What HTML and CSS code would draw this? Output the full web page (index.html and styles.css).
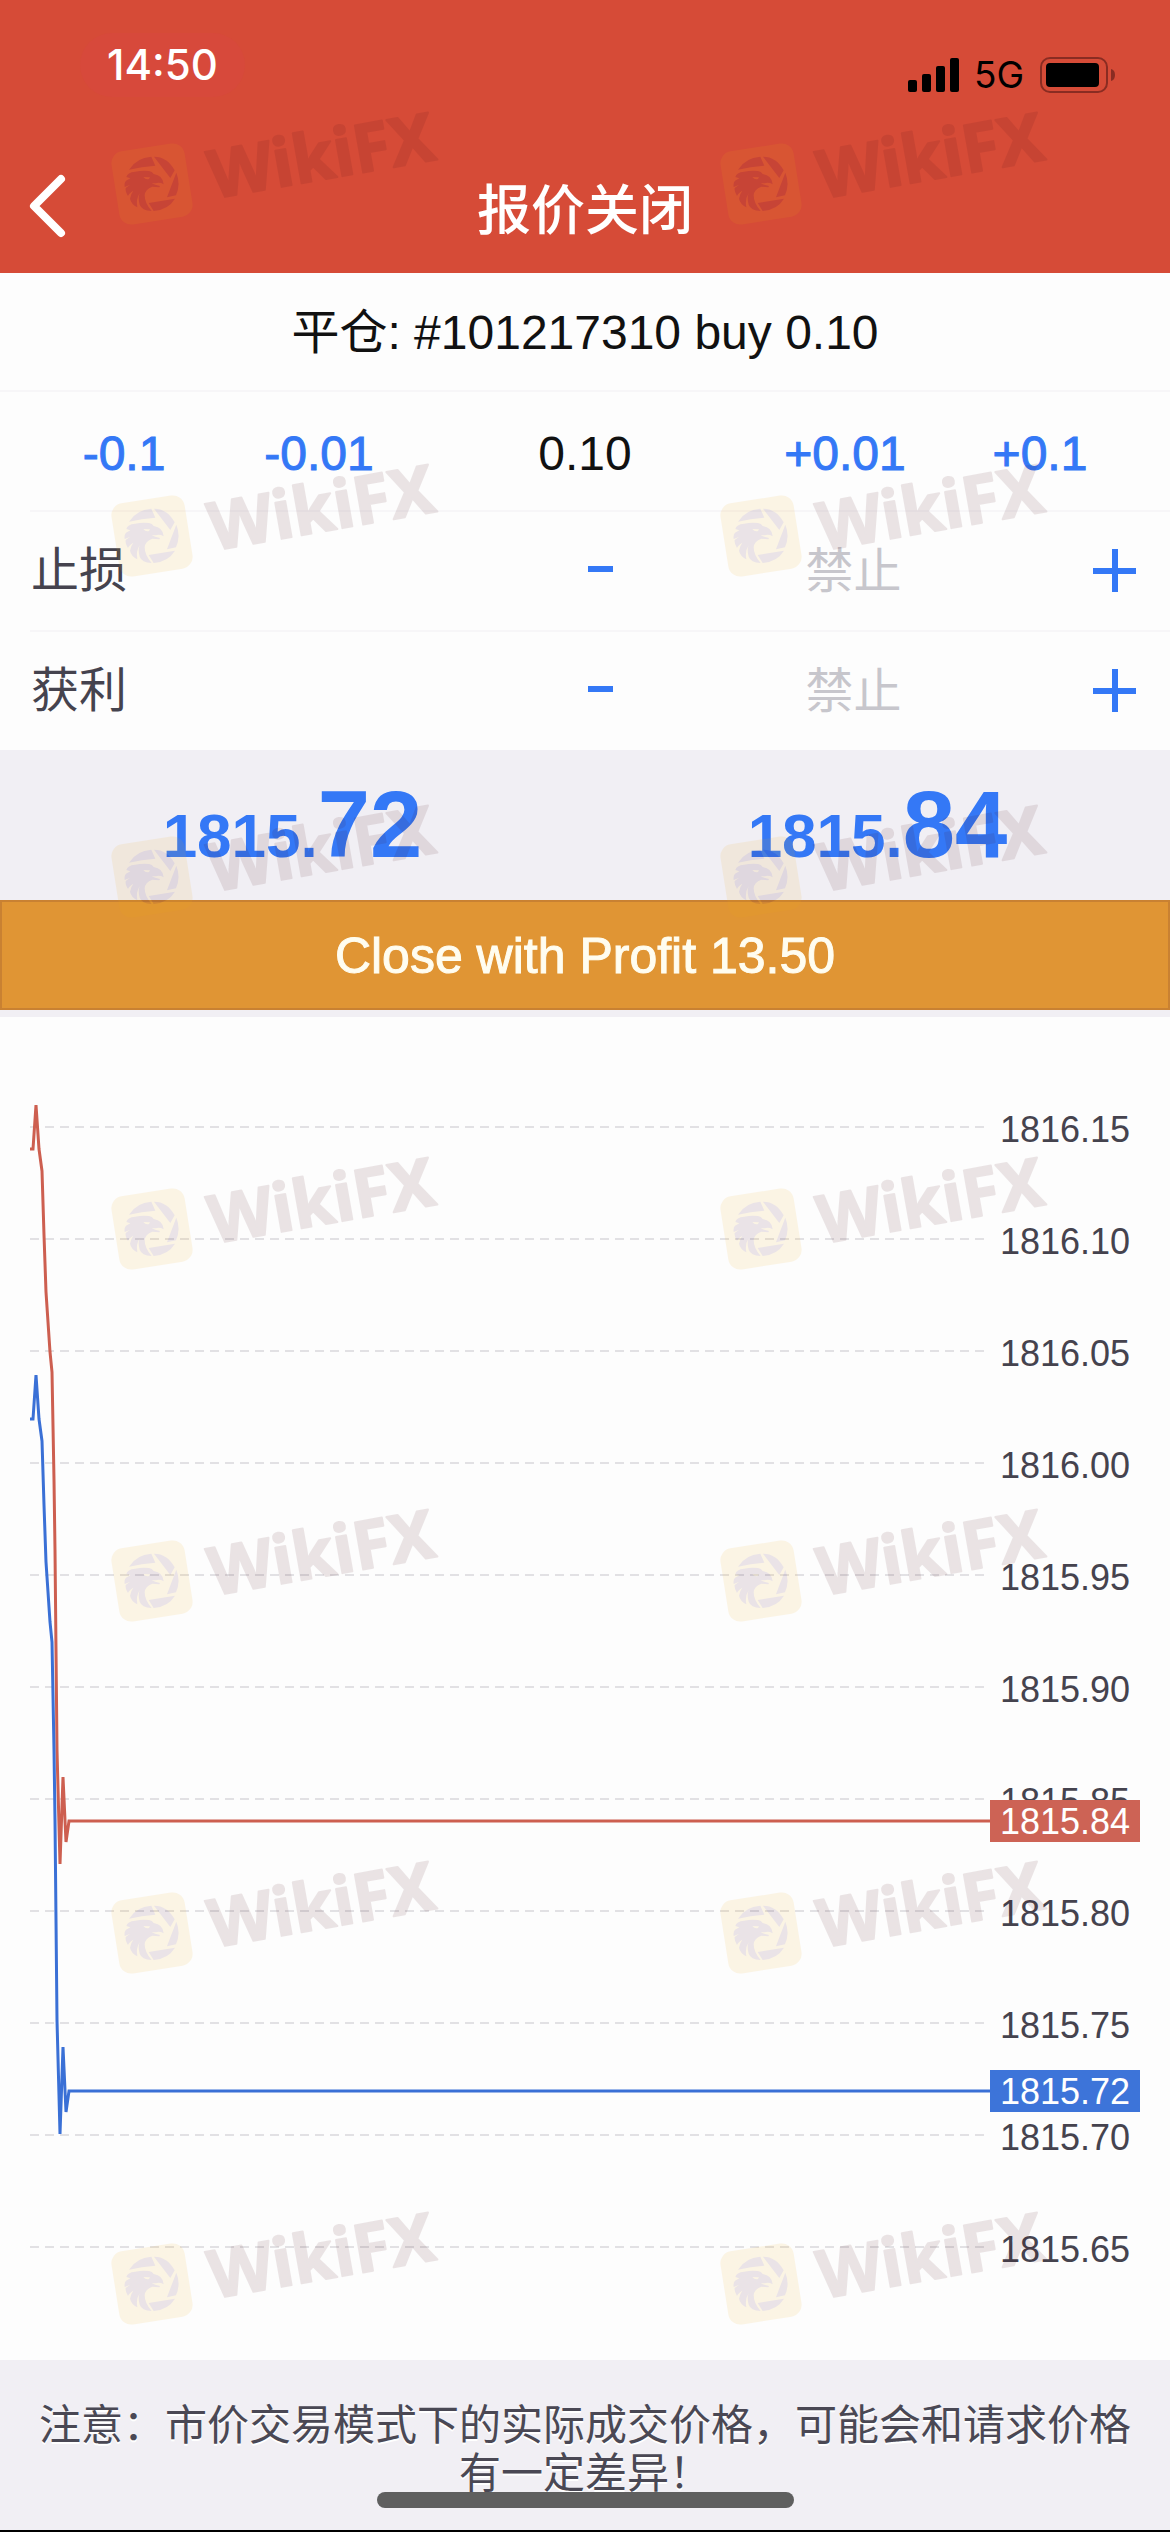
FILE: index.html
```html
<!DOCTYPE html>
<html lang="zh-CN">
  <head>
    <meta charset="UTF-8" />
    <meta name="viewport" content="width=device-width, initial-scale=1.0" />
    <title>报价关闭</title>
    <link rel="stylesheet" href="styles.css" />
  </head>
  <body>
    <header class="header">
      <div class="status-bar">
        <span class="status-time">14:50</span>
        <div class="status-icons">
          <svg class="signal-icon" width="52" height="34" viewBox="0 0 52 34">
            <rect x="0" y="22" width="9" height="12" rx="2" />
            <rect x="14" y="16" width="9" height="18" rx="2" />
            <rect x="28" y="8" width="9" height="26" rx="2" />
            <rect x="42" y="0" width="9" height="34" rx="2" />
          </svg>
          <span class="status-network">5G</span>
          <svg class="battery-icon" width="76" height="36" viewBox="0 0 76 36">
            <rect x="1" y="1" width="66" height="34" rx="9" fill="none" stroke="#8a2c22" stroke-width="2" />
            <rect x="6" y="6" width="53" height="24" rx="4" />
            <path d="M71 12 Q75 13 75 18 Q75 23 71 24 Z" fill="#8a2c22" />
          </svg>
        </div>
      </div>
      <nav class="nav-bar">
        <button type="button" class="back-button" aria-label="返回">
          <svg width="38" height="64" viewBox="0 0 38 64">
            <path d="M33 5 L6 32 L33 59" fill="none" stroke="#fff" stroke-width="8" stroke-linecap="round" stroke-linejoin="round" />
          </svg>
        </button>
        <h1 class="nav-title">报价关闭</h1>
      </nav>
    </header>

    <main class="main">
      <form class="order-form">
        <div class="order-title">平仓: #101217310 buy 0.10</div>

        <div class="volume-row">
          <button type="button" class="step-button">-0.1</button>
          <button type="button" class="step-button">-0.01</button>
          <input type="text" class="volume-input" aria-label="交易量" value="0.10" />
          <button type="button" class="step-button">+0.01</button>
          <button type="button" class="step-button">+0.1</button>
        </div>

        <div class="limit-row">
          <label for="stopLoss" class="limit-label">止损</label>
          <button type="button" class="limit-button" aria-label="减少止损">
            <svg width="26" height="44" viewBox="0 0 26 44"><path d="M0 20 H25" /></svg>
          </button>
          <input type="text" id="stopLoss" class="limit-input" placeholder="禁止" />
          <button type="button" class="limit-button" aria-label="增加止损">
            <svg width="44" height="44" viewBox="0 0 44 44"><path d="M0 22 H43 M22 0 V43" /></svg>
          </button>
        </div>

        <div class="limit-row">
          <label for="takeProfit" class="limit-label">获利</label>
          <button type="button" class="limit-button" aria-label="减少获利">
            <svg width="26" height="44" viewBox="0 0 26 44"><path d="M0 20 H25" /></svg>
          </button>
          <input type="text" id="takeProfit" class="limit-input" placeholder="禁止" />
          <button type="button" class="limit-button" aria-label="增加获利">
            <svg width="44" height="44" viewBox="0 0 44 44"><path d="M0 22 H43 M22 0 V43" /></svg>
          </button>
        </div>

        <div class="prices">
          <div class="price">1815.<span class="price-big">72</span></div>
          <div class="price">1815.<span class="price-big">84</span></div>
        </div>

        <button type="button" class="close-button">Close with Profit 13.50</button>
      </form>

      <section class="chart">
        <div class="grid-row"><span class="grid-line"></span><span class="grid-label">1816.15</span></div>
        <div class="grid-row"><span class="grid-line"></span><span class="grid-label">1816.10</span></div>
        <div class="grid-row"><span class="grid-line"></span><span class="grid-label">1816.05</span></div>
        <div class="grid-row"><span class="grid-line"></span><span class="grid-label">1816.00</span></div>
        <div class="grid-row"><span class="grid-line"></span><span class="grid-label">1815.95</span></div>
        <div class="grid-row"><span class="grid-line"></span><span class="grid-label">1815.90</span></div>
        <div class="grid-row"><span class="grid-line"></span><span class="grid-label">1815.85</span></div>
        <div class="grid-row"><span class="grid-line"></span><span class="grid-label">1815.80</span></div>
        <div class="grid-row"><span class="grid-line"></span><span class="grid-label">1815.75</span></div>
        <div class="grid-row"><span class="grid-line"></span><span class="grid-label">1815.70</span></div>
        <div class="grid-row"><span class="grid-line"></span><span class="grid-label">1815.65</span></div>

        <!-- bid is the ask line moved down by the spread -->
        <svg class="chart-lines">
          <polyline class="ask-line" points="0,132 3,132 6,88 9,132 12,154 14,218 16,275 20,335 22,355 24,463 25,533 27,733 30,847 33,760 36,825 39,804 3000,804" />
          <polyline class="bid-line" transform="translate(0 270)" points="0,132 3,132 6,88 9,132 12,154 14,218 16,275 20,335 22,355 24,463 25,533 27,733 30,847 33,760 36,825 39,804 3000,804" />
        </svg>
        <span class="price-tag ask-tag">1815.84</span>
        <span class="price-tag bid-tag">1815.72</span>
      </section>
    </main>

    <footer class="footer">
      <p class="notice">注意：市价交易模式下的实际成交价格，可能会和请求价格有一定差异！</p>
      <div class="home-indicator"></div>
    </footer>

    <svg class="watermarks" aria-hidden="true">
      <defs>
        <g id="mark">
          <g transform="rotate(-9)">
            <rect x="-37" y="-37" width="74" height="74" rx="12" fill="#f0aa14" />
          </g>
          <g transform="scale(0.333) translate(-157 -268)" fill="#490d30">
            <path d="M88 225 Q110 189 155 186 L167 213 Q125 216 88 225 Z" />
            <path d="M163 186 Q203 186 225 227 L212 250 Z" />
            <path d="M230 234 Q244 268 229 302 L202 308 Z" />
            <path d="M147 325 L226 312 Q206 345 162 349 Z" />
            <path d="M80 247 Q83 233 106 231 Q130 226 148 229 Q158 231 162 238 Q190 242 192 269 Q180 262 168 266 L156 266 Q165 271 181 274 L179 278 L158 276 Q136 284 135 302 Q135 326 156 349 Q126 347 120 330 Q114 310 120 296 Q108 314 113 338 Q94 328 91 312 Q93 298 101 288 Q86 298 85 304 Q76 290 78 280 L90 271 L75 277 Q73 264 79 258 L92 251 Z M131 247 Q138 256 148 253 L151 248 Z" fill-rule="evenodd" />
          </g>
          <text class="mark-text" transform="translate(61 15) rotate(-10)">WikiFX</text>
        </g>
        <g id="markRow">
          <use href="#mark" x="152" />
          <use href="#mark" x="761" />
        </g>
      </defs>
      <use href="#markRow" y="184" />
      <use href="#markRow" y="536" />
      <use href="#markRow" y="877" />
      <use href="#markRow" y="1229" />
      <use href="#markRow" y="1581" />
      <use href="#markRow" y="1933" />
      <use href="#markRow" y="2284" />
    </svg>
  </body>
</html>
```
FILE: styles.css
```css
/* General styling */
* {
  box-sizing: border-box;
}

body {
  position: relative;
  margin: 0;
  font-family: "Liberation Sans", "Noto Sans CJK SC", sans-serif;
  font-size: 48px;
  color: #111;
  background-color: #fdfdfd;
}

button,
input {
  margin: 0;
  padding: 0;
  border: none;
  background: none;
  font: inherit;
  text-align: center;
}

button {
  cursor: pointer;
}

svg {
  display: block;
}

/* Header */
.header {
  height: 273px;
  background-color: #d64b37;
}

.status-bar {
  display: flex;
  justify-content: space-between;
  align-items: flex-start;
  padding: 33px 54px 0 80px;
  height: 145px;
  font-family: Inter, sans-serif;
}

.status-time {
  width: 165px;
  border-radius: 32px;
  background-color: #d7493b;
  font-size: 42px;
  font-weight: 500;
  line-height: 64px;
  text-align: center;
  color: #fff;
}

.status-icons {
  display: flex;
  align-items: center;
  padding-top: 23px;
  line-height: 38px;
  color: #000;
}

.status-network {
  margin: 0 16px 0 14px;
  font-size: 37px;
}

.nav-bar {
  display: grid;
  grid-template-columns: 120px 1fr 120px;
  align-items: center;
  height: 122px;
}

.back-button {
  padding-left: 28px;
}

.nav-title {
  margin: 0;
  font-size: 54px;
  font-weight: 500;
  text-align: center;
  color: #fff;
}

/* Order form */
.order-title {
  height: 117px;
  line-height: 120px;
  text-align: center;
}

.volume-row {
  display: grid;
  grid-template-columns: 188fr 202fr 330fr 190fr 200fr;
  height: 120px;
  padding: 4px 30px 0;
  border-top: 2px solid #f7f6f8;
}

.step-button {
  color: #3478f6;
  -webkit-text-stroke: 1px #3478f6;
}

.volume-input {
  width: 100%;
  color: #111;
}

.limit-row {
  display: grid;
  grid-template-columns: 541fr 60fr 445fr 77fr;
  align-items: center;
  height: 120px;
  margin-left: 30px;
  padding-right: 17px;
  border-top: 2px solid #f7f6f8;
}

.limit-label {
  padding-left: 1px;
  line-height: 48px;
  color: #45434e;
}

.limit-button {
  display: flex;
  justify-content: center;
}

.limit-button path {
  fill: none;
  stroke: #3478f6;
  stroke-width: 6;
}

.limit-input {
  width: 100%;
}

.limit-input::placeholder {
  color: #c7c6cc;
  opacity: 1;
}

/* Bid and ask prices */
.prices {
  display: flex;
  height: 150px;
  background-color: #f1eff4;
}

.price {
  flex: 1;
  font-size: 62px;
  font-weight: bold;
  line-height: 150px;
  text-align: center;
  color: #3478f6;
}

.price-big {
  font-size: 94px;
}

.close-button {
  display: block;
  width: 100%;
  height: 110px;
  padding-top: 2px;
  border: 2px solid #c98132;
  background-color: #e09534;
  font-size: 50px;
  color: #fffdf0;
  -webkit-text-stroke: 1px #fffdf0;
}

/* Chart */
.chart {
  position: relative;
  padding: 54px 30px 57px;
  border-top: 7px solid #f1eff4;
}

.grid-row {
  display: flex;
  align-items: center;
  gap: 16px;
  height: 112px;
}

.grid-line {
  flex: 1;
  height: 2px;
  background: repeating-linear-gradient(to right, #e2e1e4 0 9px, transparent 9px 15px);
}

.grid-label {
  width: 140px;
  padding-top: 5px;
  font-size: 36px;
  color: #45434e;
}

.chart-lines {
  position: absolute;
  top: 0;
  left: 30px;
  width: calc(100% - 210px);
  height: 100%;
}

.chart-lines polyline {
  fill: none;
  stroke-width: 3;
}

.ask-line {
  stroke: #cd5f50;
}

.bid-line {
  stroke: #3a70d6;
}

/* Current price tags over the axis */
.price-tag {
  position: absolute;
  right: 30px;
  width: 150px;
  height: 42px;
  padding-left: 10px;
  font-size: 36px;
  line-height: 44px;
  color: #fff;
}

.ask-tag {
  top: 783px;
  background-color: #cd6355;
}

.bid-tag {
  top: 1053px;
  background-color: #3d74d9;
}

/* Footer */
.footer {
  position: relative;
  height: 172px;
  padding: 42px 24px 0;
  border-bottom: 2px solid #000;
  background-color: #f1eff4;
}

.notice {
  margin: 0;
  font-size: 42px;
  line-height: 48px;
  text-align: center;
  color: #4a4854;
  text-shadow: 0 2px 0 #fff;
}

.home-indicator {
  position: absolute;
  bottom: 22px;
  left: 50%;
  width: 417px;
  height: 16px;
  margin-left: -208px;
  border-radius: 8px;
  background-color: #5f5f5f;
}

/* Watermarks over the whole page */
.watermarks {
  position: absolute;
  top: 0;
  left: 0;
  width: 100%;
  height: 100%;
  opacity: 0.1;
  pointer-events: none;
}

.mark-text {
  font-family: "Noto Sans", sans-serif;
  font-size: 67px;
  font-weight: bold;
  fill: #490d17;
  stroke: #490d17;
  stroke-width: 2;
  stroke-linejoin: round;
}
```
